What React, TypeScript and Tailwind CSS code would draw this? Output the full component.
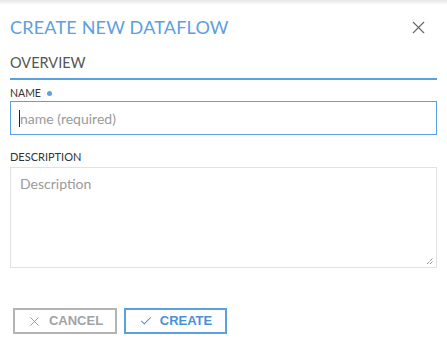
import { X, Check } from 'lucide-react'

export default function App() {
  return (
    <div className="relative h-[347px] w-[447px] overflow-hidden bg-white font-['Lato',sans-serif]">
      <div className="pointer-events-none absolute inset-x-0 top-0 h-[5px] bg-gradient-to-b from-[#e6e6e6] to-white" />

      <div className="flex flex-col px-[10px] pt-[15px]">
        <div className="flex items-center justify-between">
          <h1 className="text-[18px] leading-[24px] tracking-[0.2px] text-[#5ba0e0]">CREATE NEW DATAFLOW</h1>
          <button className="mr-[8px] text-[#666]">
            <X size={21} strokeWidth={1.3} />
          </button>
        </div>

        <div className="mt-[15px] border-b-2 border-[#5ba0e0] pb-[6px]">
          <p className="text-[14.5px] leading-[18px] text-[#555]">OVERVIEW</p>
        </div>

        <label className="mt-[6px] flex items-center gap-[6px] text-[10.5px] leading-[14px] text-[#333]">
          NAME
          <span className="h-[5px] w-[5px] rounded-full bg-[#5ba0e0]" />
        </label>
        <div className="mt-[1px] flex h-[34px] items-center border border-[#5ba0e0] px-[8px]">
          <span className="h-[17px] w-px bg-[#222]" />
          <span className="text-[14px] text-[#9a9a9a]">name (required)</span>
        </div>

        <label className="mt-[15px] text-[11px] leading-[14px] text-[#333]">DESCRIPTION</label>
        <div className="relative mt-[3px] h-[101px] border border-[#e2e2e2] px-[9px] pt-[3px]">
          <span className="text-[14px] text-[#9a9a9a]">Description</span>
          <svg className="absolute bottom-[2px] right-[2px]" width="8" height="8" viewBox="0 0 8 8">
            <path d="M1 7 L7 1 M4 7 L7 4" stroke="#555" strokeWidth="1" strokeDasharray="1 1" />
          </svg>
        </div>

        <div className="ml-[3px] mt-[40px] flex gap-[7px] font-['Liberation_Sans',sans-serif]">
          <button className="flex h-[26px] w-[104px] items-center justify-center gap-[7px] border-2 border-[#b4b4b4] text-[13px] font-bold text-[#a2a2a2]">
            <X size={15} strokeWidth={1.3} className="text-[#8a8a8a]" />
            CANCEL
          </button>
          <button className="flex h-[26px] w-[103px] items-center justify-center gap-[7px] border-2 border-[#5ba0e0] text-[13px] font-bold text-[#4a90d9]">
            <Check size={14} strokeWidth={1.8} />
            CREATE
          </button>
        </div>
      </div>
    </div>
  )
}
